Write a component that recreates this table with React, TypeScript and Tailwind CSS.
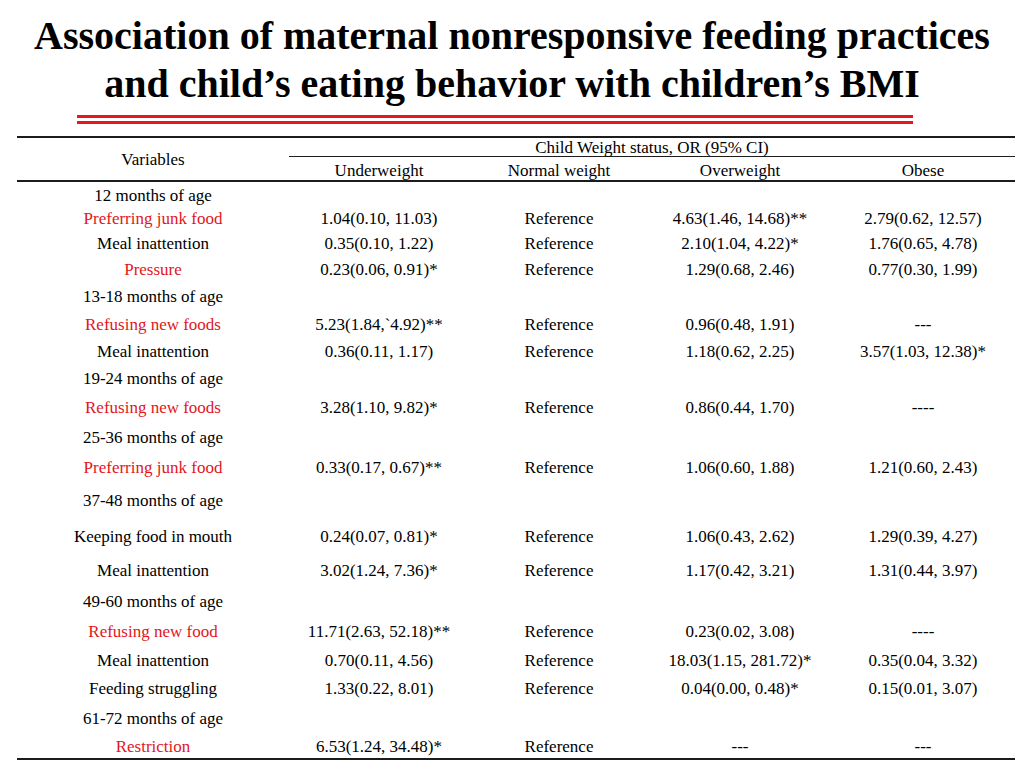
import React from 'react';

type Row =
  | { kind: 'section'; label: string; h: string }
  | { kind: 'data'; label: string; red?: boolean; vals: string[]; h: string };

// row heights taken from the slide, they are not even
const rows: Row[] = [
  { kind: 'section', label: '12 months of age', h: 'h-[22px]' },
  { kind: 'data', label: 'Preferring junk food', red: true, vals: ['1.04(0.10, 11.03)', 'Reference', '4.63(1.46, 14.68)**', '2.79(0.62, 12.57)'], h: 'h-[25px]' },
  { kind: 'data', label: 'Meal inattention', vals: ['0.35(0.10, 1.22)', 'Reference', '2.10(1.04, 4.22)*', '1.76(0.65, 4.78)'], h: 'h-[25px]' },
  { kind: 'data', label: 'Pressure', red: true, vals: ['0.23(0.06, 0.91)*', 'Reference', '1.29(0.68, 2.46)', '0.77(0.30, 1.99)'], h: 'h-[26px]' },
  { kind: 'section', label: '13-18 months of age', h: 'h-[29px]' },
  { kind: 'data', label: 'Refusing new foods', red: true, vals: ['5.23(1.84,`4.92)**', 'Reference', '0.96(0.48, 1.91)', '---'], h: 'h-[27px]' },
  { kind: 'data', label: 'Meal inattention', vals: ['0.36(0.11, 1.17)', 'Reference', '1.18(0.62, 2.25)', '3.57(1.03, 12.38)*'], h: 'h-[26px]' },
  { kind: 'section', label: '19-24 months of age', h: 'h-[29px]' },
  { kind: 'data', label: 'Refusing new foods', red: true, vals: ['3.28(1.10, 9.82)*', 'Reference', '0.86(0.44, 1.70)', '----'], h: 'h-[29px]' },
  { kind: 'section', label: '25-36 months of age', h: 'h-[30px]' },
  { kind: 'data', label: 'Preferring junk food', red: true, vals: ['0.33(0.17, 0.67)**', 'Reference', '1.06(0.60, 1.88)', '1.21(0.60, 2.43)'], h: 'h-[31px]' },
  { kind: 'section', label: '37-48 months of age', h: 'h-[35px]' },
  { kind: 'data', label: 'Keeping food in mouth', vals: ['0.24(0.07, 0.81)*', 'Reference', '1.06(0.43, 2.62)', '1.29(0.39, 4.27)'], h: 'h-[36px]' },
  { kind: 'data', label: 'Meal inattention', vals: ['3.02(1.24, 7.36)*', 'Reference', '1.17(0.42, 3.21)', '1.31(0.44, 3.97)'], h: 'h-[32px]' },
  { kind: 'section', label: '49-60 months of age', h: 'h-[31px]' },
  { kind: 'data', label: 'Refusing new food', red: true, vals: ['11.71(2.63, 52.18)**', 'Reference', '0.23(0.02, 3.08)', '----'], h: 'h-[29px]' },
  { kind: 'data', label: 'Meal inattention', vals: ['0.70(0.11, 4.56)', 'Reference', '18.03(1.15, 281.72)*', '0.35(0.04, 3.32)'], h: 'h-[28px]' },
  { kind: 'data', label: 'Feeding struggling', vals: ['1.33(0.22, 8.01)', 'Reference', '0.04(0.00, 0.48)*', '0.15(0.01, 3.07)'], h: 'h-[29px]' },
  { kind: 'section', label: '61-72 months of age', h: 'h-[30px]' },
  { kind: 'data', label: 'Restriction', red: true, vals: ['6.53(1.24, 34.48)*', 'Reference', '---', '---'], h: 'h-[27px]' },
];

const grid = 'grid grid-cols-[272px_180px_180px_182px_184px]';
const cell = 'flex items-center justify-center pt-[4px]';

export default function App() {
  return (
    <div className="w-[1024px] h-[768px] bg-white text-black overflow-hidden font-['Liberation_Serif','Times_New_Roman',serif]">
      {/* title */}
      <h1 className="pt-[12px] text-center text-[40px] leading-[48px] font-bold">
        Association of maternal nonresponsive feeding practices
        <br />
        and child’s eating behavior with children’s BMI
      </h1>

      {/* red double rule */}
      <div className="ml-[77px] mt-[7px] w-[836px] flex flex-col gap-[3px]">
        <div className="h-[3px] bg-[#e3191f]" />
        <div className="h-[3px] bg-[#e3191f]" />
      </div>

      {/* table */}
      <div className="ml-[17px] mt-[12px] w-[998px] text-[17px] leading-none">
        <div className="flex border-t-2 border-b-2 border-[#1c1c1c]">
          <div className="w-[272px] flex items-center justify-center">Variables</div>
          <div className="flex-1 flex flex-col">
            <div className="h-[19px] flex items-center justify-center border-b-[1.5px] border-[#1c1c1c]">
              Child Weight status, OR (95% CI)
            </div>
            <div className="h-[23px] grid grid-cols-[180px_180px_182px_184px]">
              <div className={cell}>Underweight</div>
              <div className={cell}>Normal weight</div>
              <div className={cell}>Overweight</div>
              <div className={cell}>Obese</div>
            </div>
          </div>
        </div>

        <div className="border-b-2 border-[#1c1c1c]">
          {rows.map((r, i) =>
            r.kind === 'section' ? (
              <div key={i} className={`${grid} ${r.h}`}>
                <div className={cell}>{r.label}</div>
              </div>
            ) : (
              <div key={i} className={`${grid} ${r.h}`}>
                <div className={`${cell} ${r.red ? 'text-[#e3151b]' : ''}`}>{r.label}</div>
                {r.vals.map((v, j) => (
                  <div key={j} className={cell}>{v}</div>
                ))}
              </div>
            )
          )}
        </div>
      </div>
    </div>
  );
}
